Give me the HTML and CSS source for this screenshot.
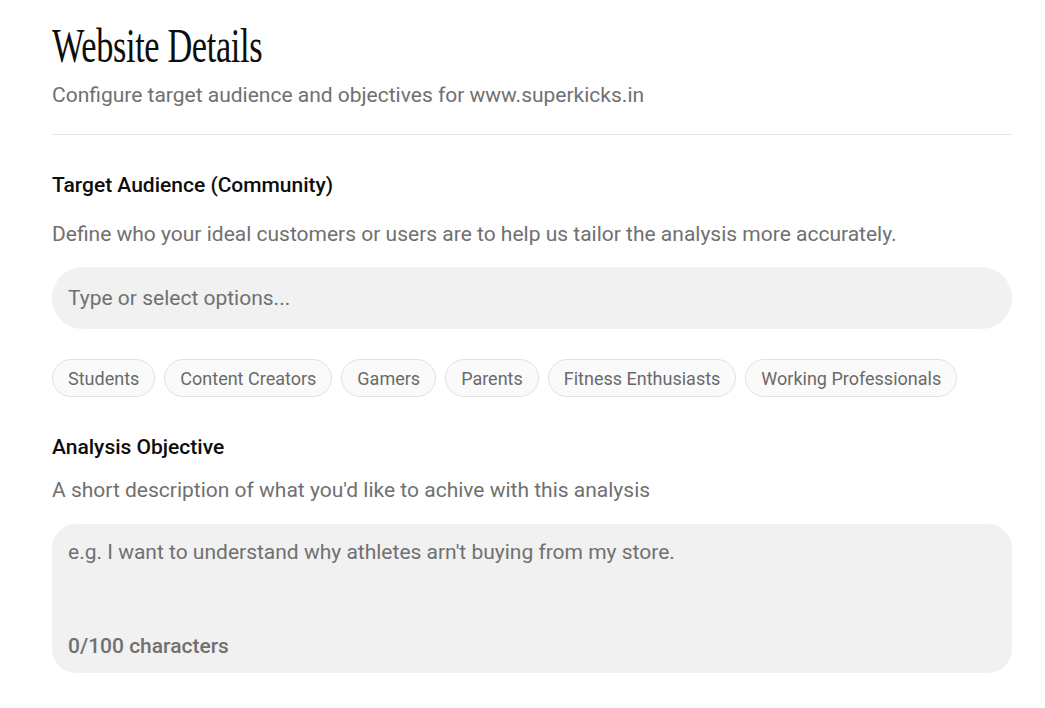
FILE: index.html
```html
<!DOCTYPE html>
<html lang="en">
<head>
<meta charset="utf-8">
<title>Website Details</title>
<link rel="stylesheet" href="styles.css">
</head>
<body>
<main class="page">
  <header class="page-head">
    <h1 class="title"><span class="title-text">Website Details</span></h1>
    <p class="subtitle">Configure target audience and objectives for www.superkicks.in</p>
  </header>

  <section class="field">
    <h2 class="field-label">Target Audience (Community)</h2>
    <p class="field-help">Define who your ideal customers or users are to help us tailor the analysis more accurately.</p>
    <input class="pill-input" type="text" placeholder="Type or select options...">
    <div class="chips">
      <button class="chip" type="button">Students</button>
      <button class="chip" type="button">Content Creators</button>
      <button class="chip" type="button">Gamers</button>
      <button class="chip" type="button">Parents</button>
      <button class="chip" type="button">Fitness Enthusiasts</button>
      <button class="chip" type="button">Working Professionals</button>
    </div>
  </section>

  <section class="field field-objective">
    <h2 class="field-label">Analysis Objective</h2>
    <p class="field-help field-help-tight">A short description of what you'd like to achive with this analysis</p>
    <div class="text-box">
      <textarea class="text-area" placeholder="e.g. I want to understand why athletes arn't buying from my store."></textarea>
      <span class="counter">0/100 characters</span>
    </div>
  </section>
</main>
</body>
</html>
```

FILE: styles.css
```css
* {
  box-sizing: border-box;
}

html, body {
  margin: 0;
  padding: 0;
  background: #ffffff;
}

body {
  font-family: Roboto, "Liberation Sans", sans-serif;
  color: #111111;
}

.page {
  width: 960px;
  margin-left: 52px;
  padding-top: 18px;
}

.page-head {
  padding-bottom: 26px;
  border-bottom: 1px solid #e6e6e6;
}

.title {
  margin: 0;
  font-family: "Liberation Serif", "Times New Roman", serif;
  font-weight: 400;
  font-size: 48px;
  line-height: 56px;
  height: 56px;
  color: #0d0d0d;
}

/* condensed display face for the page title */
.title-text {
  display: inline-block;
  transform: scaleX(0.715);
  transform-origin: left center;
  letter-spacing: -0.5px;
  white-space: nowrap;
}

.subtitle {
  margin: 8px 0 0;
  font-size: 21px;
  line-height: 26px;
  color: #707070;
}

.field {
  padding-top: 38px;
}

.field-objective {
  padding-top: 38px;
}

.field-label {
  margin: 0;
  font-size: 21px;
  font-weight: 500;
  line-height: 24px;
  color: #0d0d0d;
}

.field-help {
  margin: 24px 0 0;
  font-size: 21px;
  line-height: 26px;
  color: #707070;
}

.field-help-tight {
  margin-top: 18px;
}

.pill-input {
  display: block;
  width: 100%;
  height: 62px;
  margin-top: 20px;
  padding: 0 16px;
  border: none;
  border-radius: 31px;
  background: #f1f1f1;
  font-family: inherit;
  font-size: 21px;
  color: #333333;
  outline: none;
}

.pill-input::placeholder,
.text-area::placeholder {
  color: #707070;
}

.chips {
  display: flex;
  flex-wrap: wrap;
  gap: 9px;
  margin-top: 30px;
}

.chip {
  height: 38px;
  padding: 0 15px;
  border: 1px solid #e2e2e2;
  border-radius: 19px;
  background: #fafafa;
  font-family: inherit;
  font-size: 18px;
  color: #6a6a6a;
  cursor: pointer;
}

.text-box {
  display: flex;
  flex-direction: column;
  height: 149px;
  margin-top: 21px;
  padding: 15px 16px 14px;
  border-radius: 24px;
  background: #f1f1f1;
}

.text-area {
  flex: 1;
  padding: 0;
  border: none;
  background: transparent;
  resize: none;
  font-family: inherit;
  font-size: 21px;
  line-height: 26px;
  color: #333333;
  outline: none;
}

.counter {
  font-size: 21px;
  font-weight: 500;
  line-height: 26px;
  color: #707070;
}
```
